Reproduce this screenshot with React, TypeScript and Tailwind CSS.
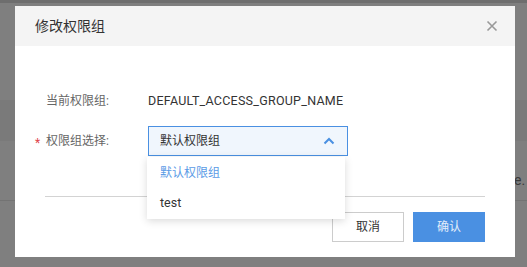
import React from "react";

const FONT = { fontFamily: 'Roboto, "Noto Sans CJK SC", "Liberation Sans", sans-serif' };

export default function App() {
  return (
    <div className="relative w-[527px] h-[267px] overflow-hidden bg-[#7f7f7f]" style={FONT}>
      {/* background page under the overlay */}
      <div className="h-[3px] bg-[#6e6e6e]" />
      <div className="h-[97px]" />
      <div className="h-[41px] bg-[#7a7a7a]" />
      <div className="h-[60px] border-b border-[#737373] flex items-start pt-[31px] pl-[514px] whitespace-nowrap text-[14px] leading-[16px] text-[#3a3a3a]">
        e.
      </div>

      {/* modal */}
      <div className="absolute left-[15px] top-[6px] w-[500px] h-[251px] bg-white flex flex-col">
        <div className="h-[40px] bg-[#f4f4f4] flex items-center justify-between pl-[20px] pr-[17px]">
          <span className="text-[14px] text-[#333]">修改权限组</span>
          <svg width="12" height="12" viewBox="0 0 12 12" className="text-[#999]">
            <path d="M1.5 1.5 L10.5 10.5 M10.5 1.5 L1.5 10.5" stroke="currentColor" strokeWidth="1.6" fill="none" />
          </svg>
        </div>

        <div className="flex flex-col pt-[40px] pl-[20px]">
          <div className="flex items-center h-[30px] text-[12px]">
            <span className="w-[11px]" />
            <span className="w-[102px] text-[#666]">当前权限组:</span>
            <span className="text-[#333] text-[12.5px] tracking-[0.25px]">DEFAULT_ACCESS_GROUP_NAME</span>
          </div>
          <div className="flex items-center h-[30px] mt-[10px] text-[12px]">
            <span className="w-[11px] text-[#e0454b] text-[12px] leading-none pt-[3px]">*</span>
            <span className="w-[102px] text-[#666]">权限组选择:</span>
            <div className="w-[200px] h-[30px] border border-[#4a90e2] bg-[#f0f6fd] flex items-center justify-between pl-[11px] pr-[12px]">
              <span className="text-[#333]">默认权限组</span>
              <svg width="12" height="8" viewBox="0 0 12 8" className="text-[#4a90e2]">
                <path d="M1.5 6.5 L6 2 L10.5 6.5" stroke="currentColor" strokeWidth="2" fill="none" />
              </svg>
            </div>
          </div>
        </div>

        <div className="mx-[30px] mt-[40px] border-t border-[#d3d3d3]" />

        <div className="flex justify-end gap-[9px] mt-[15px] px-[30px]">
          <button className="w-[72px] h-[30px] border border-[#cccccc] bg-white text-[12px] text-[#333]">取消</button>
          <button className="w-[72px] h-[30px] bg-[#4a90e2] text-[12px] text-[#e2edfb]">确认</button>
        </div>

        {/* dropdown menu */}
        <div className="absolute left-[132px] top-[151px] w-[198px] bg-white shadow-[0_2px_8px_rgba(0,0,0,0.15)] py-[1px] text-[12px]">
          <div className="h-[30px] flex items-center pl-[13px] text-[#5b9be6]">默认权限组</div>
          <div className="h-[30px] flex items-center pl-[13px] text-[#333] text-[12.5px]">test</div>
        </div>
      </div>
    </div>
  );
}
